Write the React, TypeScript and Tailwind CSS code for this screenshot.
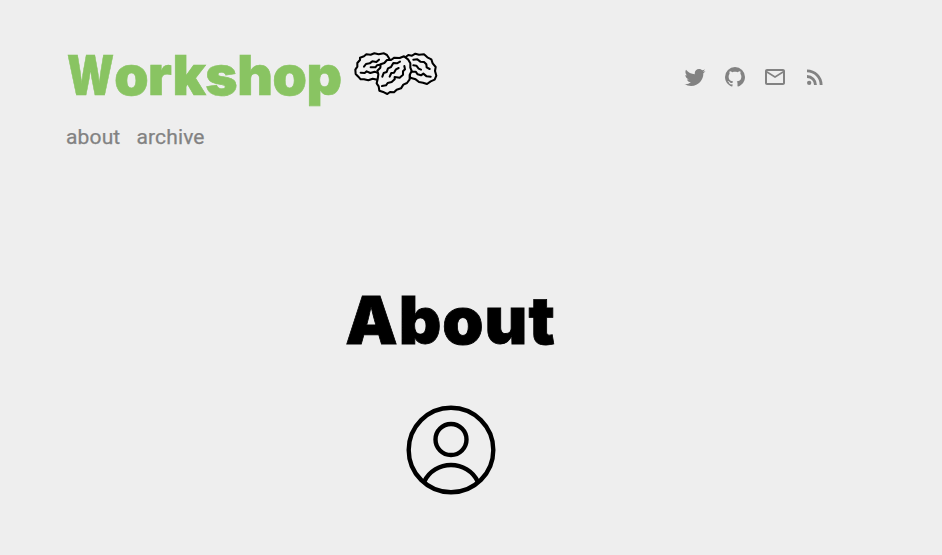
import React from "react";

const socialIcons = [
  {
    name: "Twitter",
    path: "M22.46 6c-.77.35-1.6.58-2.46.69.88-.53 1.56-1.37 1.88-2.38-.83.5-1.75.85-2.72 1.05C18.37 4.5 17.26 4 16 4c-2.35 0-4.27 1.92-4.27 4.29 0 .34.04.67.11.98C8.28 9.09 5.11 7.38 3 4.79c-.37.63-.58 1.37-.58 2.15 0 1.49.75 2.81 1.91 3.56-.71 0-1.37-.2-1.95-.5v.03c0 2.08 1.48 3.82 3.44 4.21a4.22 4.22 0 0 1-1.93.07 4.28 4.28 0 0 0 4 2.98 8.521 8.521 0 0 1-5.33 1.84c-.34 0-.68-.02-1.02-.06C3.44 20.29 5.7 21 8.12 21 16 21 20.33 14.46 20.33 8.79c0-.19 0-.37-.01-.56.84-.6 1.56-1.36 2.14-2.23z",
  },
  {
    name: "GitHub",
    path: "M12 2A10 10 0 0 0 2 12c0 4.42 2.87 8.17 6.84 9.5.5.08.66-.23.66-.5v-1.69c-2.77.6-3.36-1.34-3.36-1.34-.46-1.16-1.11-1.47-1.11-1.47-.91-.62.07-.6.07-.6 1 .07 1.53 1.03 1.53 1.03.87 1.52 2.34 1.07 2.91.83.09-.65.35-1.09.63-1.34-2.22-.25-4.55-1.11-4.55-4.92 0-1.11.38-2 1.03-2.71-.1-.25-.45-1.29.1-2.64 0 0 .84-.27 2.75 1.02.79-.22 1.65-.33 2.5-.33s1.71.11 2.5.33c1.91-1.29 2.75-1.02 2.75-1.02.55 1.35.2 2.39.1 2.64.65.71 1.03 1.6 1.03 2.71 0 3.82-2.34 4.66-4.57 4.91.36.31.69.92.69 1.85V21c0 .27.16.59.67.5C19.14 20.16 22 16.42 22 12A10 10 0 0 0 12 2z",
  },
  {
    name: "Email",
    path: "M20 4H4c-1.1 0-2 .9-2 2v12c0 1.1.9 2 2 2h16c1.1 0 2-.9 2-2V6c0-1.1-.9-2-2-2zm0 14H4V8l8 5 8-5v10zm-8-7L4 6h16l-8 5z",
  },
  {
    name: "RSS",
    path: "M6.18 15.64a2.18 2.18 0 1 1 0 4.36 2.18 2.18 0 0 1 0-4.36zM4 4.44A15.56 15.56 0 0 1 19.56 20h-2.83A12.73 12.73 0 0 0 4 7.27V4.44zm0 5.66a9.9 9.9 0 0 1 9.9 9.9h-2.83A7.07 7.07 0 0 0 4 12.93V10.1z",
  },
];

function Walnuts() {
  return (
    <svg
      viewBox="0 0 300 165"
      className="h-[55px] w-[100px] shrink-0"
      fill="none"
      stroke="#000"
      strokeWidth="6.2"
      strokeLinecap="round"
      strokeLinejoin="round"
      aria-hidden="true"
    >
      <g fill="#f2f2f2">
        <path d="M97 104L83 101L70 106L57 103L47 103L40 95L32 87L31 74L37 65L37 54L45 45L45 38L57 34L64 28L77 29L88 25L101 28L117 25L126 30L134 43L131 60L110 85Z" />
        <path d="M182 36L190 30L201 32L211 26L222 29L237 28L247 37L259 43L263 55L272 66L270 78L274 92L269 104L257 109L246 117L234 113L222 111L212 103L196 98L188 70Z" />
        <path d="M98 102L100 88L97 77L106 68L107 58L118 54L126 45L138 45L148 38L164 39L177 34L189 43L196 55L196 68L200 78L194 90L194 103L186 114L175 119L168 130L155 134L147 142L135 141L127 147L117 142L103 137L101 124L95 115Z" />
      </g>
      <path d="M57 65L63 57L74 55L82 49L94 51L102 44M77 67L91 67L96 61L105 59M47 83L59 84L65 79L76 84L89 80L96 83" />
      <path d="M112 95L116 84L125 81L129 70L138 66L145 54L156 55L165 50M111 123L123 121L128 114L140 111L149 103L149 96L164 98L174 89L174 79L180 73L178 63M134 95L139 84L147 83L153 73L161 69" />
      <path d="M205 44L217 43L226 50L237 51L244 58L245 67L254 72M205 61L214 62L221 71L228 74M201 80L212 80L218 88L228 91L235 86L245 94L257 95" />
    </svg>
  );
}

export default function App() {
  return (
    <div className="min-h-[555px] overflow-hidden bg-[#eeeeee] font-['Inter',sans-serif] text-black">
      <div className="ml-[66px] w-[769px]">
        <header>
          <div className="flex items-start justify-between pt-[45px]">
            <div className="flex items-start">
              <h1 className="w-[279px] whitespace-nowrap pl-px text-[55px] leading-[60px] font-black tracking-[-0.4px] text-[#89c462] [-webkit-text-stroke:0.6px_#89c462] [stroke-linejoin:round]">
                <span className="mr-[-12px] inline-block origin-left scale-x-[0.79]">W</span>
                orkshop
              </h1>
              <Walnuts />
            </div>
            <div className="mt-5 mr-[8.5px] flex gap-4 text-[#828282]">
              {socialIcons.map((icon) => (
                <a key={icon.name} href="#" aria-label={icon.name}>
                  <svg viewBox="0 0 24 24" className="size-6" fill="currentColor">
                    <path d={icon.path} />
                  </svg>
                </a>
              ))}
            </div>
          </div>
          <nav className="mt-[17px] flex gap-4 font-['Roboto',sans-serif] text-[21px] leading-[30px] tracking-[0.15px] text-[#828282] [-webkit-text-stroke:0.25px_#828282]">
            <a href="#">about</a>
            <a href="#">archive</a>
          </nav>
        </header>
        <main className="flex flex-col items-center pt-[128px]">
          <h2 className="whitespace-nowrap text-[66px] leading-[80px] font-black tracking-[1px] [-webkit-text-stroke:0.8px_#000] [stroke-linejoin:round]">
            About
          </h2>
          <svg
            viewBox="0 0 90 90"
            className="mt-[45px] size-[90px]"
            fill="none"
            stroke="#000"
            strokeWidth="4.4"
            aria-label="Profile"
          >
            <circle cx="45" cy="45" r="42.3" />
            <circle cx="45" cy="34.5" r="15.5" />
            <path d="M18 77C23 66 34 60 45 60S67 66 72 77" />
          </svg>
        </main>
      </div>
    </div>
  );
}
